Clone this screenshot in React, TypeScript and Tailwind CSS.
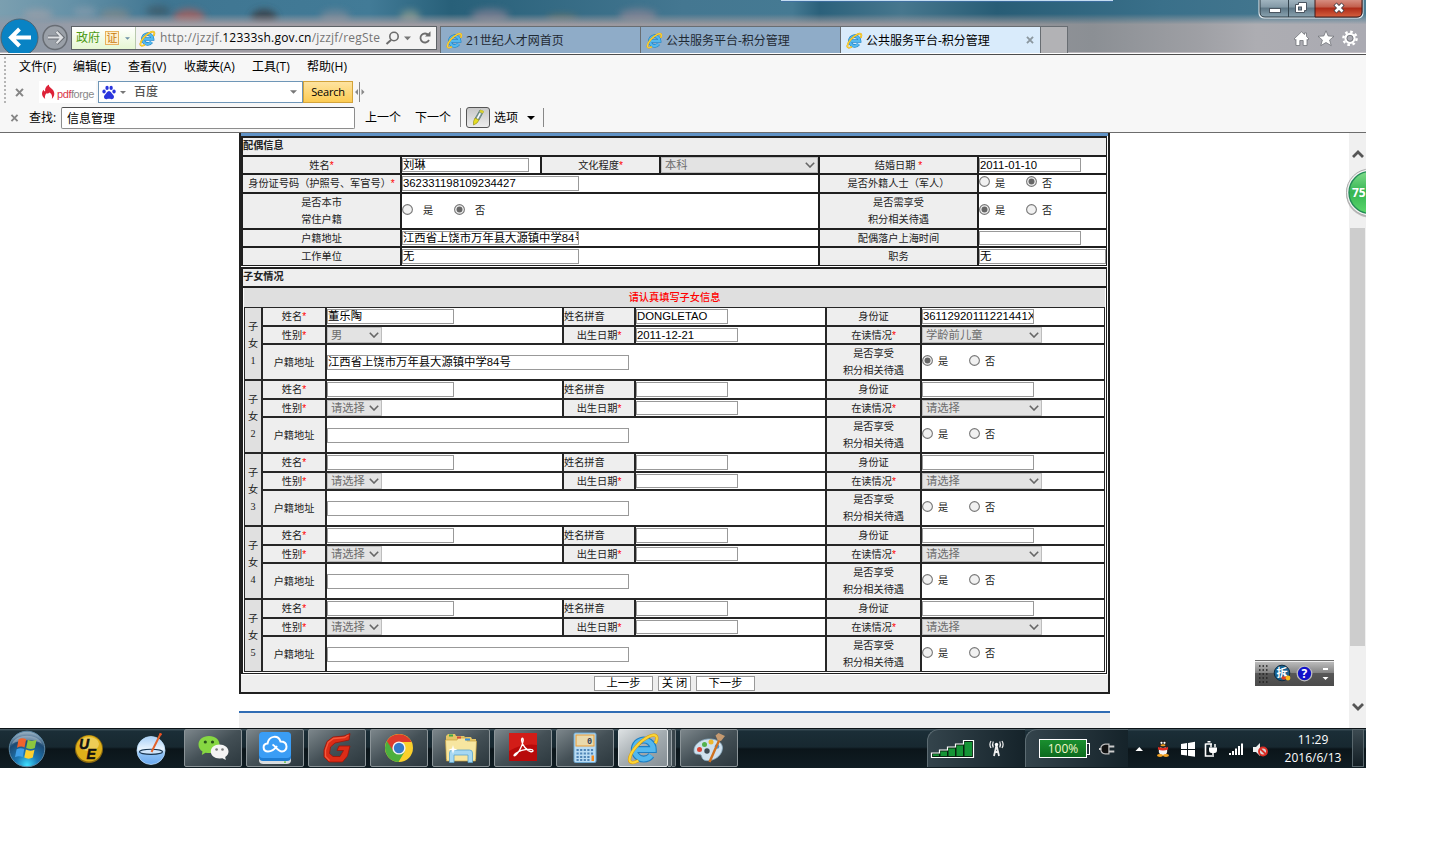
import React from "react";

type Kids = { children?: React.ReactNode; className?: string };

const UI = "font-['Open_Sans','Noto_Sans_CJK_SC',sans-serif]";
const FORM = "font-['Liberation_Sans','Noto_Sans_CJK_SC',sans-serif]";

/* ---------- shared icons ---------- */

function IeLogo({ className }: { className: string }) {
  return (
    <svg viewBox="0 0 32 32" className={className}>
      <path d="M8 17 H25.500 A9.200 9.200 0 1 0 23.600 22.600" fill="none" stroke="#1c7fc4" strokeWidth="6.800" />
      <path d="M8 17 H25.500 A9.200 9.200 0 1 0 23.600 22.600" fill="none" stroke="#54b8ee" strokeWidth="4.600" />
      <path d="M27.500 11 C31 4 28 1 21 4.500 C12 9 3.500 19 2.500 26 C2 30.500 6.500 30.500 11 27.800" fill="none" stroke="#d99a10" strokeWidth="3.200" />
      <path d="M27.500 11 C31 4 28 1 21 4.500 C12 9 3.500 19 2.500 26 C2 30.500 6.500 30.500 11 27.800" fill="none" stroke="#fbd536" strokeWidth="2.100" />
    </svg>
  );
}

function Cross({ className }: { className: string }) {
  return (
    <svg viewBox="0 0 10 10" className={className}>
      <path d="M1.200 1 L8.800 9 M8.800 1 L1.200 9" stroke="currentColor" strokeWidth="2.300" fill="none" />
    </svg>
  );
}

function Caret({ className }: { className: string }) {
  return (
    <svg viewBox="0 0 8 4" className={className}>
      <path d="M0 0 H8 L4 4 Z" fill="currentColor" />
    </svg>
  );
}

/* ---------- title bar ---------- */

function Wallpaper() {
  return (
    <svg className="absolute inset-0 h-[53px] w-[1366px]" viewBox="0 0 1366 53" preserveAspectRatio="none">
      <defs>
        <linearGradient id="sky" x1="0" x2="1" y1="0" y2="0">
          <stop offset="0" stopColor="#7b9fb0" />
          <stop offset="0.05" stopColor="#6692a8" />
          <stop offset="0.12" stopColor="#3f7591" />
          <stop offset="0.27" stopColor="#427b97" />
          <stop offset="0.33" stopColor="#286079" />
          <stop offset="0.5" stopColor="#447791" />
          <stop offset="0.58" stopColor="#457a93" />
          <stop offset="0.6" stopColor="#2b617b" />
          <stop offset="0.66" stopColor="#47778e" />
          <stop offset="0.73" stopColor="#285d76" />
          <stop offset="0.85" stopColor="#3a708a" />
          <stop offset="1" stopColor="#4a7b92" />
        </linearGradient>
        <linearGradient id="hazeColor" x1="0" x2="1" y1="0" y2="0">
          <stop offset="0" stopColor="#8b99a8" />
          <stop offset="0.1" stopColor="#a09da4" />
          <stop offset="0.7" stopColor="#96969c" />
          <stop offset="0.8" stopColor="#8b8f94" />
          <stop offset="0.88" stopColor="#9fa0a5" />
          <stop offset="0.92" stopColor="#adadb2" />
          <stop offset="1" stopColor="#aaaab2" />
        </linearGradient>
        <linearGradient id="fade" x1="0" x2="0" y1="0" y2="1">
          <stop offset="0.26" stopColor="#fff" stopOpacity="0" />
          <stop offset="0.46" stopColor="#fff" stopOpacity="1" />
        </linearGradient>
        <mask id="lower">
          <rect width="1366" height="53" fill="url(#fade)" />
        </mask>
        <filter id="soft" x="-50%" y="-100%" width="200%" height="300%">
          <feGaussianBlur stdDeviation="3.500" />
        </filter>
      </defs>
      <rect width="1366" height="53" fill="url(#sky)" />
      <g opacity="0.850">
        <ellipse cx="38" cy="15" rx="15" ry="6" fill="#b0a3a8" filter="url(#soft)" opacity="0.600" />
        <ellipse cx="85" cy="12" rx="12" ry="5" fill="#9aa3b0" filter="url(#soft)" opacity="0.600" />
        <ellipse cx="115" cy="15" rx="15" ry="6" fill="#8b8a86" filter="url(#soft)" opacity="0.700" />
        <ellipse cx="158" cy="11" rx="12" ry="5" fill="#3d4f58" filter="url(#soft)" opacity="0.700" />
        <ellipse cx="189" cy="18" rx="16" ry="9" fill="#a5605f" filter="url(#soft)" />
        <ellipse cx="264" cy="18" rx="13" ry="9" fill="#3a3f46" filter="url(#soft)" />
        <ellipse cx="335" cy="17" rx="15" ry="7" fill="#77899a" filter="url(#soft)" />
        <ellipse cx="410" cy="17" rx="10" ry="7" fill="#84988f" filter="url(#soft)" />
        <ellipse cx="490" cy="16" rx="19" ry="7" fill="#7a7e92" filter="url(#soft)" />
        <ellipse cx="562" cy="18" rx="16" ry="4" fill="#7a7a68" filter="url(#soft)" opacity="0.700" />
        <ellipse cx="638" cy="16" rx="19" ry="7" fill="#818394" filter="url(#soft)" />
      </g>
      <rect width="1366" height="53" fill="url(#hazeColor)" mask="url(#lower)" />
      <path d="M781 0 H1113" stroke="#c4dcf0" strokeWidth="2" />
      <path d="M781 1.500 H1113" stroke="#3f6fa8" strokeWidth="0.700" />
      <path d="M0 53 H1366" stroke="#c9c3c9" strokeWidth="1.500" />
    </svg>
  );
}

function AddressBar() {
  return (
    <div className="flex h-[24px] w-[366px] items-center border border-[#5d6266] bg-[#f3f3f3]">
      <div className="flex h-full w-[64px] items-center border-r border-[#b9c9ae] bg-gradient-to-b from-white to-[#e6f7d2] pl-[4px]">
        <span className="w-[29px] whitespace-nowrap text-[12px] leading-[20px] text-[#4c9a12]">政府</span>
        <span className="flex h-[14px] w-[14px] items-center justify-center border border-[#e8b25c] bg-[#fdf0cd] text-[11px] leading-[12px] text-[#c87a10]">
          证
        </span>
        <Caret className="ml-[6px] h-[3px] w-[5px] text-[#6b8fa6]" />
      </div>
      <IeLogo className="ml-[3px] h-[17px] w-[17px] shrink-0" />
      <span className="ml-[4px] w-[222px] overflow-hidden whitespace-nowrap text-[12px] leading-[20px] tracking-[0.200px] text-[#757575]">
        http://jzzjf.<span className="text-black">12333sh.gov.cn</span>/jzzjf/regSte
      </span>
      <svg viewBox="0 0 48 16" className="ml-[3px] h-[16px] w-[48px] shrink-0">
        <circle cx="9" cy="6.500" r="4.200" fill="none" stroke="#6c6c6c" strokeWidth="1.600" />
        <path d="M6 10 L1.500 14" stroke="#6c6c6c" strokeWidth="2" />
        <path d="M19 6.500 H26 L22.500 10.200Z" fill="#777" />
        <path d="M43.500 5.200 A4.500 4.500 0 1 0 44 10" fill="none" stroke="#6c6c6c" strokeWidth="1.800" />
        <path d="M40 6.500 H45.500 V1.200Z" fill="#6c6c6c" />
      </svg>
    </div>
  );
}

function Tab({ title, active }: { title: string; active?: boolean }) {
  return (
    <div
      className={
        active
          ? "flex h-[27px] w-[200px] items-center border-l border-t border-[#686d72] bg-[#d9ebfb] pl-[5px] text-black"
          : "flex h-[27px] w-[200px] items-center border-l border-t border-[#686d72] bg-[#8facc8] pl-[5px] text-[#1f2933]"
      }
    >
      <IeLogo className="h-[17px] w-[17px] shrink-0" />
      <span className="ml-[3px] mt-[1px] w-[160px] whitespace-nowrap text-[12px] leading-[20px]">{title}</span>
      {active && <Cross className="h-[8px] w-[8px] text-[#8b979f]" />}
    </div>
  );
}

function WindowControls() {
  return (
    <svg className="absolute right-[2px] top-0 h-[19px] w-[106px]" viewBox="0 0 106 19">
      <defs>
        <linearGradient id="glass" x1="0" x2="0" y1="0" y2="1">
          <stop offset="0" stopColor="#a5b8c3" />
          <stop offset="0.45" stopColor="#8399a6" />
          <stop offset="0.5" stopColor="#5d7685" />
          <stop offset="1" stopColor="#8aa3b0" />
        </linearGradient>
        <linearGradient id="closeRed" x1="0" x2="0" y1="0" y2="1">
          <stop offset="0" stopColor="#d99487" />
          <stop offset="0.45" stopColor="#c25e4c" />
          <stop offset="0.5" stopColor="#ad2a17" />
          <stop offset="1" stopColor="#d5603f" />
        </linearGradient>
      </defs>
      <path d="M1 -1 H105 V13 Q105 18 100 18 H6 Q1 18 1 13Z" fill="#dfe7eb" stroke="#e7eef2" strokeWidth="1" />
      <path d="M2 -1 H104 V12 Q104 17 99 17 H7 Q2 17 2 12Z" fill="url(#glass)" stroke="#2b3a44" />
      <path d="M57 -1 H104 V12 Q104 17 99 17 H57Z" fill="url(#closeRed)" stroke="#3f1c1c" />
      <path d="M30.500 0 V17" stroke="#34444e" />
      <rect x="11.500" y="8.500" width="11" height="4" fill="#fff" stroke="#4a5560" />
      <path d="M40.500 2.500 H48.500 V10.500 H46.500 V12.500 H37.500 V4.500 H40.500Z" fill="#fff" stroke="#4a5560" />
      <rect x="40.500" y="7" width="3" height="3" fill="#7890a0" stroke="#4a5560" />
      <path d="M77 4 L85 12 M85 4 L77 12" stroke="#4a4048" strokeWidth="4.500" />
      <path d="M77.500 4.500 L84.500 11.500 M84.500 4.500 L77.500 11.500" stroke="#fff" strokeWidth="2.600" />
    </svg>
  );
}

function TitleBar() {
  return (
    <header className="relative h-[55px] overflow-hidden border-b border-[#4d4d4d]">
      <Wallpaper />
      <div className="relative flex h-[53px] items-start">
        <svg className="h-[53px] w-[71px] shrink-0" viewBox="0 0 71 53">
          <circle cx="19.500" cy="37.500" r="18.500" fill="#0983c4" stroke="#4b6474" />
          <path d="M31 37.500 H11 M19.500 29 L11 37.500 L19.500 46" fill="none" stroke="#fff" strokeWidth="4" />
          <circle cx="55" cy="37.500" r="12" fill="#9aa0a8" stroke="#686d74" strokeWidth="1.500" />
          <path d="M48 37.500 H62 M56.500 31.500 L62.500 37.500 L56.500 43.500" fill="none" stroke="#6a6f76" strokeWidth="3.800" />
          <path d="M48 37.500 H61 M56.500 31.800 L62 37.500 L56.500 43.200" fill="none" stroke="#dfe1e4" strokeWidth="2.200" />
        </svg>
        <div className="mt-[26px] flex">
          <AddressBar />
          <div className="ml-[3px] flex">
            <Tab title="21世纪人才网首页" />
            <Tab title="公共服务平台-积分管理" />
            <Tab title="公共服务平台-积分管理" active />
            <div className="h-[27px] w-[28px] border border-b-0 border-[#686d72] bg-[#b2b2b5]" />
          </div>
        </div>
        <svg className="ml-[225px] mt-[30px] h-[18px] w-[68px]" viewBox="0 0 68 18">
          <path
            d="M1 9 L8.500 1.800 L11.500 4.500 V3 H13.500 V6.400 L16 9 L14.800 10 L14 9.300 V15.500 H10.200 V10.500 H6.800 V15.500 H3 V9.300 L2.200 10Z"
            fill="#fff"
            stroke="#66696e"
            strokeWidth="0.700"
          />
          <path d="M33 0.800 L35.200 6 L41 6.300 L36.600 10 L38.200 15.600 L33 12.500 L27.800 15.600 L29.400 10 L25 6.300 L30.800 6Z" fill="#fff" stroke="#66696e" strokeWidth="0.700" />
          <circle cx="57" cy="8.300" r="6.600" fill="none" stroke="#fff" strokeWidth="2.400" strokeDasharray="2.600 2.580" />
          <circle cx="57" cy="8.300" r="4.500" fill="none" stroke="#fff" strokeWidth="2.200" />
          <circle cx="57" cy="8.300" r="3" fill="none" stroke="#66696e" strokeWidth="0.700" />
        </svg>
      </div>
      <WindowControls />
    </header>
  );
}

/* ---------- menu, search and find bars ---------- */

function ToolBars() {
  return (
    <div className="flex h-[78px] flex-col border-b border-[#6c6c6c] bg-[#f7f7f7] text-[12px] leading-[20px] text-black">
      <div className="flex h-[49px]">
        <div className="ml-[4px] mt-[2px] h-[46px] w-[2px] bg-[repeating-linear-gradient(to_bottom,#b5b5b5_0_2px,transparent_2px_4px)]" />
        <div className="flex flex-col">
          <nav className="flex h-[24px] items-center whitespace-nowrap pl-[13px]">
            <span className="w-[54px]">文件(F)</span>
            <span className="w-[55px]">编辑(E)</span>
            <span className="w-[56px]">查看(V)</span>
            <span className="w-[68px]">收藏夹(A)</span>
            <span className="w-[55px]">工具(T)</span>
            <span>帮助(H)</span>
          </nav>
          <div className="mt-[2px] flex h-[22px] items-center">
            <Cross className="ml-[9px] h-[9px] w-[9px] text-[#868686]" />
            <div className="ml-[15px] flex h-[22px] w-[57px] items-center bg-white pl-[2px]">
              <svg viewBox="0 0 16 18" className="h-[18px] w-[15px] shrink-0">
                <path d="M4.500 16.500 C0 13 0.500 8.500 3 6.500 C3 8 4 8.500 4.500 8 C4 5 6 2 8.500 1.200 C8 3.500 10 4 12 6 C15 9 15 13 11.500 16.500 C12.500 13 11 10.500 9 9.500 C8 11 6.500 10.500 6 10.200 C4 12 3.800 14.500 4.500 16.500Z" fill="#dd2238" />
              </svg>
              <span className="ml-[1px] mt-[4px] text-[11px] leading-[14px] tracking-[-0.400px] text-[#888] font-['Liberation_Sans',sans-serif]">
                <span className="text-[#d9364a]">pdf</span>forge
              </span>
            </div>
            <div className="ml-[2px] flex h-[22px] w-[205px] items-center border border-[#6f96b7] bg-white">
              <svg viewBox="0 0 15 15" className="ml-[3px] h-[15px] w-[14px]">
                <g fill="#2a35dc">
                  <ellipse cx="2.200" cy="6.500" rx="1.800" ry="2.200" />
                  <ellipse cx="5.400" cy="2.600" rx="1.800" ry="2.300" />
                  <ellipse cx="9.800" cy="2.600" rx="1.800" ry="2.300" />
                  <ellipse cx="12.900" cy="6.500" rx="1.800" ry="2.200" />
                  <path d="M7.500 6 C9.500 6 10 8.500 11.800 10 C14 12 12.500 15 10 14.600 C8.500 14.200 6.500 14.200 5 14.600 C2.500 15 1 12 3.200 10 C5 8.500 5.500 6 7.500 6Z" />
                </g>
              </svg>
              <Caret className="ml-[4px] h-[3px] w-[6px] text-[#777]" />
              <span className="ml-[8px] w-[156px] text-[12px] font-medium text-[#555]">百度</span>
              <Caret className="h-[4px] w-[7px] text-[#777]" />
            </div>
            <button className="h-[22px] w-[50px] border border-[#d3a33a] bg-gradient-to-b from-[#fee3a0] via-[#fdd778] to-[#fccb53] p-0 text-[11px] leading-[18px] tracking-[-0.200px] text-black">
              Search
            </button>
            <svg viewBox="0 0 12 20" className="ml-[1px] h-[20px] w-[12px]">
              <path d="M5.500 0 V20" stroke="#888" />
              <path d="M1 10 L4 7 V13Z M10.500 10 L7.500 7 V13Z" fill="#888" />
            </svg>
          </div>
        </div>
      </div>
      <div className="flex h-[28px] items-center whitespace-nowrap pb-[1px]">
        <Cross className="ml-[10px] h-[8px] w-[9px] text-[#868686]" />
        <span className="ml-[10px] w-[32px]">查找:</span>
        <div className="h-[22px] w-[294px] rounded-[2px] border border-[#8d8d8d] border-t-[#4e4e4e] bg-white pl-[5px] leading-[21px]">信息管理</div>
        <span className="ml-[10px] w-[50px]">上一个</span>
        <span className="w-[45px]">下一个</span>
        <span className="h-[19px] w-px bg-[#888]" />
        <span className="ml-[5px] flex h-[21px] w-[24px] items-center justify-center rounded-[3px] border border-[#555] bg-gradient-to-b from-[#c8c8c8] to-[#ececec]">
          <svg viewBox="0 0 14 17" className="h-[17px] w-[14px]">
            <path d="M9 1 L12.500 2.500 L8 11 L4 9.500Z" fill="#7f9c96" stroke="#4c6c67" strokeWidth="0.700" />
            <path d="M8.500 4 L10 4.500 L7 10 L5.500 9.500Z" fill="#fff" />
            <path d="M4 9 L8 11 L6 14 L2.500 16 L2.500 12.500Z" fill="#e5dd20" stroke="#989520" strokeWidth="0.700" />
            <path d="M9.500 0.800 L13 2 L12 4.500 L8.500 3Z" fill="#d8d030" />
          </svg>
        </span>
        <span className="ml-[4px] w-[33px]">选项</span>
        <Caret className="h-[4px] w-[8px] text-black" />
        <span className="ml-[8px] h-[19px] w-px bg-[#888]" />
      </div>
    </div>
  );
}

/* ---------- form parts ---------- */

const Star = () => <span className="text-[#f00]">*</span>;

function Label({ children, className = "bg-[#eee] justify-center" }: Kids) {
  return (
    <div
      className={
        "flex min-w-0 items-center overflow-hidden whitespace-nowrap text-center text-[10.200px] leading-[17px] text-[#222] " + className
      }
    >
      <span>{children}</span>
    </div>
  );
}

function Cell({ children, className = "" }: Kids) {
  return <div className={"flex min-w-0 items-center overflow-hidden bg-white " + className}>{children}</div>;
}

function Field({ children, className = "" }: Kids) {
  return (
    <div
      className={
        "overflow-hidden whitespace-nowrap border border-[#999] bg-white text-[11.350px] leading-[13px] text-black " + className
      }
    >
      {children}
    </div>
  );
}

function Select({ children, className = "" }: Kids) {
  return (
    <div
      className={
        "flex h-[16px] items-center justify-between border border-[#bdbdbd] bg-[#e3e3e3] pl-[3px] pr-[2px] text-[11.300px] leading-[14px] text-[#6d6d6d] " + className
      }
    >
      <span className="whitespace-nowrap">{children}</span>
      <svg viewBox="0 0 10 6" className="h-[6px] w-[10px] shrink-0">
        <path d="M0.800 0.800 L5 5 L9.200 0.800" fill="none" stroke="#666" strokeWidth="1.600" />
      </svg>
    </div>
  );
}

function Radio({ on }: { on?: boolean }) {
  return (
    <svg viewBox="0 0 11 11" className="-mt-[4px] h-[11px] w-[11px] shrink-0">
      <circle cx="5.500" cy="5.500" r="4.900" fill="#f1f1f1" stroke="#777" strokeWidth="1.100" />
      {on && <circle cx="5.500" cy="5.500" r="3" fill="#666" />}
    </svg>
  );
}

function YesNo({ yes, no, wide }: { yes?: boolean; no?: boolean; wide?: boolean }) {
  const word = wide ? "pl-[10px] w-[41px]" : "pl-[5px] w-[36px]";
  return (
    <div className="flex items-center whitespace-nowrap text-[10.200px] leading-[14px] text-[#222]">
      <Radio on={yes} />
      <span className={word}>是</span>
      <Radio on={no} />
      <span className={word}>否</span>
    </div>
  );
}

function SectionTitle({ children }: Kids) {
  return (
    <div className="h-[17px] bg-[#eee] text-[10.200px] font-bold leading-[16px] text-[#222]">{children}</div>
  );
}

function SpouseTable() {
  return (
    <section className="flex w-[866px] flex-col gap-[2px] bg-[#1f1f1f] pb-px pl-[2px] pr-px pt-[2px]">
      <SectionTitle>配偶信息</SectionTitle>
      <div className="grid grid-cols-[157px_138px_117px_157px_157px_127px] grid-rows-[16px_17px_34px_16px_17px] gap-[2px]">
        <Label>姓名<Star /></Label>
        <Cell><Field className="h-[14px] w-[127px] leading-[12px]">刘琳</Field></Cell>
        <Label>文化程度<Star /></Label>
        <Cell><Select className="w-[157px]">本科</Select></Cell>
        <Label>结婚日期 <Star /></Label>
        <Cell><Field className="h-[14px] w-[102px]">2011-01-10</Field></Cell>

        <Label>身份证号码（护照号、军官号）<Star /></Label>
        <Cell className="col-span-3"><Field className="h-[15px] w-[177px]">362331198109234427</Field></Cell>
        <Label>是否外籍人士（军人）</Label>
        <Cell><YesNo no /></Cell>

        <Label>是否本市<br />常住户籍</Label>
        <Cell className="col-span-3"><YesNo no wide /></Cell>
        <Label>是否需享受<br />积分相关待遇</Label>
        <Cell><YesNo yes /></Cell>

        <Label>户籍地址</Label>
        <Cell className="col-span-3"><Field className="h-[14px] w-[177px] leading-[12px]">江西省上饶市万年县大源镇中学84号</Field></Cell>
        <Label>配偶落户上海时间</Label>
        <Cell><Field className="h-[14px] w-[102px]" /></Cell>

        <Label>工作单位</Label>
        <Cell className="col-span-3"><Field className="h-[15px] w-[177px]">无</Field></Cell>
        <Label>职务</Label>
        <Cell><Field className="h-[15px] w-[127px]">无</Field></Cell>
      </div>
    </section>
  );
}

type Child = { name?: string; pinyin?: string; id?: string; sex?: string; birth?: string; study?: string; addr?: string; yes?: boolean };

const children: Child[] = [
  {
    name: "董乐陶",
    pinyin: "DONGLETAO",
    id: "36112920111221441X",
    sex: "男",
    birth: "2011-12-21",
    study: "学龄前儿童",
    addr: "江西省上饶市万年县大源镇中学84号",
    yes: true,
  },
  {},
  {},
  {},
  {},
];

function ChildRows({ c, n }: { c: Child; n: number }) {
  return (
    <div className="grid grid-cols-[16px_62px_235px_70px_189px_93px_182px] grid-rows-[17px_16px_34px] gap-[2px]">
      <Label className="row-span-3 justify-center bg-[#e0e0e0] font-['Liberation_Serif','Noto_Sans_CJK_SC',serif]">子<br />女<br />{n}</Label>
      <Label>姓名<Star /></Label>
      <Cell><Field className="h-[15px] w-[127px]">{c.name}</Field></Cell>
      <Label className="justify-start bg-[#eee]">姓名拼音</Label>
      <Cell><Field className="h-[15px] w-[92px]">{c.pinyin}</Field></Cell>
      <Label>身份证</Label>
      <Cell><Field className="h-[15px] w-[112px]">{c.id}</Field></Cell>

      <Label>性别<Star /></Label>
      <Cell><Select className="w-[55px]">{c.sex ?? "请选择"}</Select></Cell>
      <Label>出生日期<Star /></Label>
      <Cell><Field className="h-[14px] w-[102px]">{c.birth}</Field></Cell>
      <Label>在读情况<Star /></Label>
      <Cell><Select className="w-[120px]">{c.study ?? "请选择"}</Select></Cell>

      <Label>户籍地址</Label>
      <Cell className="col-span-3"><Field className="h-[15px] w-[302px]">{c.addr}</Field></Cell>
      <Label>是否享受<br />积分相关待遇</Label>
      <Cell><YesNo yes={c.yes} /></Cell>
    </div>
  );
}

function ChildrenTable() {
  return (
    <section className="mt-px flex w-[866px] flex-col gap-[2px] bg-[#1f1f1f] pb-px pl-[2px] pr-px pt-[2px]">
      <SectionTitle>子女情况</SectionTitle>
      <div className="bg-white px-px pb-px">
        <div className="h-[19px] bg-[#dfdfdf] text-center text-[10.200px] font-medium leading-[19px] text-[#f00]">请认真填写子女信息</div>
        <div className="flex flex-col gap-[2px] bg-[#262626] p-px">
          {children.map((c, i) => (
            <ChildRows key={i} c={c} n={i + 1} />
          ))}
        </div>
      </div>
    </section>
  );
}

function FormButton({ children, className }: Kids) {
  return (
    <button className={"h-[15px] whitespace-nowrap border border-[#999] bg-white p-0 text-[11.300px] leading-[11px] text-black " + className}>{children}</button>
  );
}

function PageBody() {
  return (
    <div className="flex h-[595px] bg-white">
      <main className={"w-[1349px] overflow-hidden pl-[239px] " + FORM}>
        <div className="h-[561px] w-[871px] border-x-2 border-b-2 border-[#202020] bg-white">
          <div className="h-[3px] bg-[#5f92c6]" />
          <SpouseTable />
          <ChildrenTable />
          <div className="mt-px flex h-[17px] items-center justify-center gap-[5px] bg-[#eee]">
            <FormButton className="w-[59px]">上一步</FormButton>
            <FormButton className="w-[33px]">关 闭</FormButton>
            <FormButton className="w-[59px]">下一步</FormButton>
          </div>
        </div>
        <div className="mt-[17px] h-[17px] w-[871px] border-t-2 border-[#2f6cb4] bg-[#efefef]" />
      </main>
      <div className="flex w-[17px] flex-col items-center bg-[#f0f0f0]">
        <svg viewBox="0 0 12 8" className="mt-[17px] h-[8px] w-[12px]">
          <path d="M1 7 L6 2 L11 7" fill="none" stroke="#555" strokeWidth="2.800" />
        </svg>
        <div className="mt-[70px] h-[418px] w-[15px] bg-[#cdcdcd]" />
        <svg viewBox="0 0 12 8" className="mt-[57px] h-[8px] w-[12px]">
          <path d="M1 1 L6 6 L11 1" fill="none" stroke="#555" strokeWidth="2.800" />
        </svg>
      </div>
    </div>
  );
}

/* ---------- overlays ---------- */

function SpeedBadge() {
  return (
    <div className="absolute left-[1346px] top-[168px] h-[50px] w-[20px] overflow-hidden">
      <svg viewBox="0 0 20 50" className="h-[50px] w-[20px]">
        <defs>
          <linearGradient id="ball" x1="0" x2="0" y1="0" y2="1">
            <stop offset="0" stopColor="#7fdc8a" />
            <stop offset="0.5" stopColor="#35b552" />
            <stop offset="1" stopColor="#5dd86c" />
          </linearGradient>
        </defs>
        <circle cx="24" cy="25.500" r="24" fill="#bbb" />
        <circle cx="24" cy="24.500" r="23.500" fill="#f2f2f2" stroke="#aaa" />
        <circle cx="24" cy="24.500" r="21" fill="url(#ball)" stroke="#238c57" strokeWidth="1.400" />
        <text x="6" y="28.500" fontSize="12" fontWeight="700" fill="#fff" fontFamily="Open Sans">75</text>
      </svg>
    </div>
  );
}

function LanguageBar() {
  return (
    <svg className="absolute left-[1255px] top-[660px] h-[26px] w-[79px]" viewBox="0 0 79 26">
      <defs>
        <linearGradient id="lang" x1="0" x2="0" y1="0" y2="1">
          <stop offset="0" stopColor="#c6c6c6" />
          <stop offset="0.48" stopColor="#858585" />
          <stop offset="0.52" stopColor="#575757" />
          <stop offset="1" stopColor="#4b4b4b" />
        </linearGradient>
      </defs>
      <rect width="79" height="26" fill="url(#lang)" />
      <path d="M0 0.500 H79" stroke="#6d6d6d" />
      <path d="M0 1.500 H79" stroke="#eee" />
      <path d="M4 6 H13 M4 10 H13 M4 14 H13 M4 18 H13 M4 22 H13" stroke="#222" strokeWidth="1.500" strokeDasharray="1.500 2" />
      <circle cx="27" cy="13" r="7.800" fill="#17618f" stroke="#0f2c42" />
      <text x="21.500" y="17" fontSize="11" fontWeight="700" fill="#fff" fontFamily="Noto Sans CJK SC">拆</text>
      <ellipse cx="29" cy="18" rx="2.600" ry="1.800" fill="#e0401c" />
      <circle cx="33" cy="18" r="2.400" fill="#f7bd1b" />
      <circle cx="49.500" cy="13.500" r="7.300" fill="#1212c9" stroke="#bdbdbd" strokeWidth="1.300" />
      <text x="46.500" y="18" fontSize="12" fontWeight="700" fill="#fff" fontFamily="Open Sans">?</text>
      <rect x="68" y="8" width="5" height="2" fill="#fff" />
      <path d="M67.500 17 H73.500 L70.500 20Z" fill="#fff" />
    </svg>
  );
}

/* ---------- task bar ---------- */

function TaskButton({ children, active }: { children: React.ReactNode; active?: boolean }) {
  return (
    <div
      className={
        active
          ? "flex h-[38px] w-[50px] items-center justify-center rounded-[2px] border border-[#dfe4e6] bg-gradient-to-br from-[#dde1e3] via-[#a4acb0] to-[#858f95]"
          : "flex h-[38px] w-[58px] items-center justify-center rounded-[2px] border border-[#8b9498] bg-gradient-to-br from-[#7c868b] via-[#445056] to-[#2c383e]"
      }
    >
      {children}
    </div>
  );
}

function StartOrb() {
  return (
    <svg viewBox="0 0 38 38" className="h-[38px] w-[38px]">
      <defs>
        <radialGradient id="orb" cx="0.5" cy="0.95" r="0.9">
          <stop offset="0" stopColor="#3fe0ff" />
          <stop offset="0.35" stopColor="#1c78b4" />
          <stop offset="0.75" stopColor="#1d4a73" />
          <stop offset="1" stopColor="#8fa9bd" />
        </radialGradient>
      </defs>
      <circle cx="19" cy="19" r="17.800" fill="url(#orb)" stroke="#5c88a5" />
      <path d="M4 14 C8 3 30 3 34 14 C28 9 12 9 4 14Z" fill="#fff" opacity="0.300" />
      <path d="M10.500 9.500 C13 7.500 16 8 18.200 9.300 L16.500 17.500 C14 16 11.500 16.200 9 17.800Z" fill="#f0642d" />
      <path d="M19.800 9.800 C22.500 11.300 25.500 11.300 28.500 9.800 L26.800 18 C24 19.500 21 19.200 18.200 17.900Z" fill="#8dc63f" />
      <path d="M8.600 19.300 C11 17.800 14 17.800 16.300 19 L14.700 27 C12 25.800 9.500 25.800 7 27.300Z" fill="#3f9fe8" />
      <path d="M17.900 19.500 C20.500 21 23.500 21 26.500 19.700 L24.800 27.600 C22 29 19 29 16.300 27.500Z" fill="#fdd02f" />
    </svg>
  );
}

function UltraEdit() {
  return (
    <svg viewBox="0 0 30 30" className="h-[30px] w-[30px]">
      <circle cx="15" cy="15" r="14" fill="#8b6a10" />
      <circle cx="15" cy="14.500" r="13" fill="#deb01a" />
      <ellipse cx="15" cy="10" rx="10" ry="7" fill="#fff0a0" opacity="0.450" />
      <text x="5" y="14.500" fontSize="14" fontWeight="700" fontStyle="italic" fill="#111" stroke="#111" strokeWidth="0.500" fontFamily="Liberation Sans">U</text>
      <text x="12.500" y="25" fontSize="14" fontWeight="700" fontStyle="italic" fill="#111" stroke="#111" strokeWidth="0.500" fontFamily="Liberation Sans">E</text>
    </svg>
  );
}

function Dial() {
  return (
    <svg viewBox="0 0 30 34" className="h-[34px] w-[30px]">
      <defs>
        <linearGradient id="dialFill" x1="0" x2="0" y1="0" y2="1">
          <stop offset="0" stopColor="#a9d0f7" />
          <stop offset="0.45" stopColor="#e9f4fe" />
          <stop offset="0.6" stopColor="#8fc2f5" />
          <stop offset="1" stopColor="#6aa8ee" />
        </linearGradient>
      </defs>
      <circle cx="15" cy="18.500" r="14" fill="url(#dialFill)" stroke="#b9daf8" strokeWidth="0.800" />
      <ellipse cx="15" cy="19.800" rx="11.500" ry="2.600" fill="#cfe5fb" stroke="#17344f" strokeWidth="1.100" />
      <path d="M15.500 20 L24.500 2" stroke="#e2622b" strokeWidth="1.900" />
      <circle cx="24.500" cy="2.200" r="1.300" fill="#ef5023" />
    </svg>
  );
}

function WeChat() {
  return (
    <svg viewBox="0 0 32 28" className="h-[28px] w-[32px]">
      <path d="M12 2 C5.500 2 1.500 6 1.500 10.500 C1.500 13.500 3 16 5.500 17.500 L4.800 21 L8.500 18.700 C18 20.500 22.500 15.500 22.500 10.500 C22.500 6 18.500 2 12 2Z" fill="#86d742" />
      <circle cx="8.300" cy="8" r="1.600" fill="#28541a" />
      <circle cx="15.500" cy="8" r="1.600" fill="#28541a" />
      <path d="M22.500 10.500 C17.500 10.500 13.800 13.600 13.800 17.500 C13.800 21.500 17.500 24.500 22.500 24.500 L25.500 24.200 L28.800 26 L28.200 23 C30.500 21.500 31.500 19.700 31.500 17.500 C31.500 13.600 27.500 10.500 22.500 10.500Z" fill="#f4f4f4" />
      <circle cx="19.600" cy="15.500" r="1.300" fill="#777" />
      <circle cx="25.500" cy="15.500" r="1.300" fill="#777" />
    </svg>
  );
}

function CloudDrive() {
  return (
    <svg viewBox="0 0 34 34" className="h-[34px] w-[34px]">
      <path d="M1 25 H33 V29 Q33 33 29 33 H5 Q1 33 1 29Z" fill="#d9dde0" />
      <rect x="1" y="1" width="32" height="29" rx="4" fill="#1e7cd2" />
      <rect x="1" y="1" width="32" height="26" rx="4" fill="#3a9df5" />
      <path d="M19 15 C16.500 18.500 14 20.500 10 20.500 C4.500 20.500 4 13 9.500 12.500 C11 4 20.500 4 22.500 10.500 C30.500 10.500 30 20.500 24 20.500 C19.500 20.500 18 15.500 14.500 13.500" fill="none" stroke="#fff" strokeWidth="2" />
      <rect x="26" y="30.500" width="2" height="1.200" fill="#55c12d" />
    </svg>
  );
}

function RedG() {
  return (
    <svg viewBox="0 0 30 32" className="h-[32px] w-[30px]">
      <path d="M28 1.500 L27 8 L13 11 L8.500 15 L7.500 21.500 L11 24.500 L18 24.500 L21.500 18.500 H15 L17 14 H28 L25.500 24 L20.500 30 H7 L2 25 V18 L5 9.500 L11 5 L22 4Z" fill="#dc2c17" stroke="#9c1408" strokeWidth="0.800" />
      <path d="M26.500 3 L22.500 5.500 L11.500 6.500 L6.200 10.500 L3.500 18 V24.500 L7.500 28.500" fill="none" stroke="#f4593c" strokeWidth="1.300" />
    </svg>
  );
}

function Chrome() {
  return (
    <svg viewBox="0 0 30 30" className="h-[30px] w-[30px]">
      <circle cx="15" cy="15" r="14" fill="#fbd02c" />
      <path d="M15 15 L2.900 8 A14 14 0 0 0 14.500 29 L21 18Z" fill="#4caf3e" />
      <path d="M2.900 8 A14 14 0 0 1 27.500 9 H15 L9.500 18.500Z" fill="#dd3a2b" />
      <circle cx="15" cy="15" r="6.600" fill="#f4f4f4" />
      <circle cx="15" cy="15" r="5.200" fill="#3579c9" />
    </svg>
  );
}

function Explorer() {
  return (
    <svg viewBox="0 0 34 32" className="h-[32px] w-[34px]">
      <path d="M2 4 L4 2 H11 L12 4 H20 L21 5 H27 L28 7 H32 V27 H2Z" fill="#e4c566" />
      <path d="M1.500 8 H13 L14 6 H22 L23 9 H32.500 L31.500 29 H2.500Z" fill="#f7e6a0" stroke="#c79f3d" strokeWidth="0.700" />
      <rect x="5" y="2.500" width="4" height="2" fill="#3da845" />
      <rect x="13" y="4.500" width="4" height="2" fill="#d34a3a" />
      <rect x="21" y="6.500" width="5" height="2" fill="#3c8fd6" />
      <path d="M5.500 30.500 V21 Q5.500 18 8.500 18 H25.500 Q28.500 18 28.500 21 V30.500 H24 V23 H10 V30.500Z" fill="#a6d8f2" stroke="#5ca3cb" strokeWidth="0.800" />
      <path d="M9 13 L10 16.500 L13.500 17.500 L10 18.500 L9 22 L8 18.500 L4.500 17.500 L8 16.500Z" fill="#fff" />
    </svg>
  );
}

function Acrobat() {
  return (
    <svg viewBox="0 0 28 28" className="-mt-[2px] h-[28px] w-[28px]">
      <rect width="28" height="28" fill="#b80a0a" />
      <path d="M0 0 H28 V12 Q14 10 0 18Z" fill="#d21d18" />
      <path d="M6 22.500 C9 21 13.500 13 14.200 7.500 C14.300 4.500 12.500 4.500 12.600 7.500 C13 12 18 18 22 18.800 C25 19 24.500 16.500 21.500 16.400 C16 16.200 10.500 17.500 6.500 20.500 C4.500 22 4.800 23.200 6 22.500Z" fill="none" stroke="#fff" strokeWidth="1.400" />
    </svg>
  );
}

function Calculator() {
  return (
    <svg viewBox="0 0 24 32" className="h-[32px] w-[24px]">
      <rect x="1" y="1" width="22" height="29.500" rx="1.500" fill="#b9dcf4" stroke="#6da7d0" />
      <rect x="3" y="3" width="18" height="11" fill="#e9d9ac" stroke="#e79a35" />
      <text x="14" y="12.200" fontSize="8.500" fontWeight="700" fill="#303a55" fontFamily="Liberation Mono">0</text>
      <path d="M3.500 18 H21 M3.500 21.500 H21 M3.500 25 H17.500 M3.500 28 H17.500" stroke="#4e84b5" strokeWidth="2" strokeDasharray="2.200 1.400" />
      <rect x="18.500" y="23.500" width="2.500" height="5.500" fill="#f58a1f" />
    </svg>
  );
}

function Palette() {
  return (
    <svg viewBox="0 0 34 34" className="h-[34px] w-[34px]">
      <path d="M16 8 C8 8.500 1.500 14 2 20 C2.300 24 5.500 23 8 23.500 C10.500 24 9 27.500 12 29 C18 31.500 30 27 30.500 17 C30.500 11 24 7.500 16 8Z" fill="#cfe1ee" stroke="#88a8be" strokeWidth="0.800" />
      <circle cx="7.500" cy="18.500" r="2.500" fill="#dc4433" />
      <circle cx="12.500" cy="13.500" r="2.500" fill="#54b14d" />
      <circle cx="19" cy="11" r="2.500" fill="#edb72d" />
      <circle cx="25" cy="15.500" r="2.300" fill="#4d91d2" />
      <circle cx="15" cy="20" r="2.700" fill="#3d4a52" />
      <path d="M27.500 8.500 L17.500 31" stroke="#ce7120" strokeWidth="2.400" />
      <path d="M23.500 4.500 L26.500 2 L33 5 L29 10 L25.500 9Z" fill="#c59a70" />
    </svg>
  );
}

function Tray() {
  return (
    <div className="flex">
      <div className="h-[38px] w-[98px] rounded-tl-[12px] border-l border-t border-[#5d6c73] bg-gradient-to-r from-[#34444c] to-[#15232a]">
        <svg viewBox="0 0 98 37" className="h-[37px] w-[98px]">
          <path d="M3.500 27.500 V23 H11.500 V20 H19.500 V17 H27.500 V14 H35.500 V10.500 H45.500 V27.500Z" fill="#07200f" stroke="#fff" strokeWidth="1.200" />
          <path d="M5 26 V24.300 H11 V26Z M12.500 26 V21.500 H19 V26Z M20.500 26 V18.500 H27 V26Z M28.500 26 V15.500 H35 V26Z M36.500 26 V12 H44 V26Z" fill="#159436" />
          <path d="M66 26 L68.500 15 L71 26 M67.500 22 H70" fill="none" stroke="#eee" strokeWidth="1.800" />
          <circle cx="68.500" cy="14.500" r="1.700" fill="#fff" />
          <path d="M65.300 11.500 Q63.800 14.500 65.300 17.500 M71.700 11.500 Q73.200 14.500 71.700 17.500 M63 11 Q60.800 14.500 63 18 M74 11 Q76.200 14.500 74 18" fill="none" stroke="#eee" strokeWidth="1.200" />
        </svg>
      </div>
      <div className="flex h-[38px] w-[103px] items-center rounded-tl-[12px] border-l border-t border-[#5d6c73] bg-gradient-to-r from-[#34444c] to-[#15232a] pl-[13px]">
        <div className="flex h-[19px] w-[48px] items-center justify-center border border-white bg-gradient-to-b from-[#1a8f2f] to-[#0c6a1e] text-[12px] leading-[14px] text-[#f1f8c8]">
          100%
        </div>
        <div className="h-[12px] w-[3px] border border-l-0 border-white" />
        <svg viewBox="0 0 20 14" className="ml-[9px] h-[14px] w-[18px]">
          <path d="M11 1.500 H7 Q2 2 2 7 T7 12.500 H11Z" fill="#111" stroke="#bbb" strokeWidth="1.400" />
          <path d="M11 4.200 H17 M11 9.800 H17 M2.500 7 H0" stroke="#ccc" strokeWidth="2" />
        </svg>
      </div>
      <svg viewBox="0 0 150 37" className="h-[37px] w-[150px]">
        <path d="M7.500 22 L11.300 18 L15 22Z" fill="#fff" />
        <ellipse cx="35" cy="20.500" rx="5.600" ry="6.500" fill="#222" />
        <ellipse cx="35" cy="22" rx="4.200" ry="4.500" fill="#f5f5f5" />
        <circle cx="35" cy="15" r="3.900" fill="#222" />
        <circle cx="33.500" cy="13.800" r="1.100" fill="#fff" />
        <circle cx="36.500" cy="13.800" r="1.100" fill="#fff" />
        <ellipse cx="35" cy="16.300" rx="2.500" ry="1" fill="#f2a223" />
        <path d="M30 18 Q35 20 40 18 V20.500 Q35 22.500 30 20.500Z" fill="#e12d23" />
        <ellipse cx="32" cy="26.500" rx="3" ry="1.400" fill="#f2a223" />
        <ellipse cx="38" cy="26.500" rx="3" ry="1.400" fill="#f2a223" />
        <path d="M53 15 L59 14.100 V20 H53Z M60 13.900 L67 12.800 V20 H60Z M53 21 H59 V26.500 L53 25.700Z M60 21 H67 V27.800 L60 26.700Z" fill="#fff" />
        <path d="M77.500 15 H84 M77.500 14.500 V27 H84 M79.500 12.800 H82.500" fill="none" stroke="#fff" strokeWidth="1.600" />
        <path d="M81 18.500 H89 V21 Q89 24 86.500 24 H83.500 Q81 24 81 21Z" fill="#fff" />
        <path d="M83 18.500 V15 M87 18.500 V15 M85 24 V28" stroke="#fff" strokeWidth="1.500" />
        <path d="M102 26 V24 M105 26 V22 M108 26 V19.500 M111 26 V17 M114 26 V14.500" stroke="#fff" strokeWidth="2" />
        <path d="M125 18 H128 L132 14 V27 L128 23 H125Z" fill="#eee" />
        <circle cx="135" cy="22.500" r="4" fill="#d9d2d2" stroke="#dc2d24" strokeWidth="1.900" />
        <path d="M132.300 20 L137.700 25" stroke="#dc2d24" strokeWidth="1.800" />
      </svg>
      <div className="flex h-[39px] w-[71px] flex-col items-center pr-[1px] pt-[2px] text-[12px] leading-[18px] text-white">
        <span>11:29</span>
        <span>2016/6/13</span>
      </div>
      <div className="ml-[3px] h-[38px] w-[12px] border border-[#59676d] bg-gradient-to-b from-[#3c4a51] to-[#141f25]" />
    </div>
  );
}

function TaskBar() {
  return (
    <footer className="flex h-[40px] items-start border-t border-[#0c1317] bg-[linear-gradient(to_bottom,#4f626b_0,#1b2e37_2px,#172830_18px,#0b151a_20px,#101d23_100%)]">
      <div className="flex h-[39px] w-[184px] items-center">
        <span className="ml-[8px]"><StartOrb /></span>
        <span className="ml-[28px]"><UltraEdit /></span>
        <span className="ml-[32px]"><Dial /></span>
      </div>
      <div className="flex w-[743px] gap-[4px]">
        <TaskButton><WeChat /></TaskButton>
        <TaskButton><CloudDrive /></TaskButton>
        <TaskButton><RedG /></TaskButton>
        <TaskButton><Chrome /></TaskButton>
        <TaskButton><Explorer /></TaskButton>
        <TaskButton><Acrobat /></TaskButton>
        <TaskButton><Calculator /></TaskButton>
        <div className="flex">
          <TaskButton active><IeLogo className="h-[33px] w-[33px]" /></TaskButton>
          <div className="h-[38px] w-[4px] rounded-r-[2px] border border-l-0 border-[#9aa3a7] bg-[#5a666c]" />
          <div className="h-[38px] w-[4px] rounded-r-[2px] border border-l-0 border-[#7b858a] bg-[#3b474d]" />
        </div>
        <TaskButton><Palette /></TaskButton>
      </div>
      <Tray />
    </footer>
  );
}

export default function App() {
  return (
    <div className={"h-[860px] w-[1445px] overflow-hidden bg-white " + UI}>
      <div className="relative flex h-[768px] w-[1366px] flex-col overflow-hidden">
        <TitleBar />
        <ToolBars />
        <PageBody />
        <TaskBar />
        <SpeedBadge />
        <LanguageBar />
      </div>
    </div>
  );
}
